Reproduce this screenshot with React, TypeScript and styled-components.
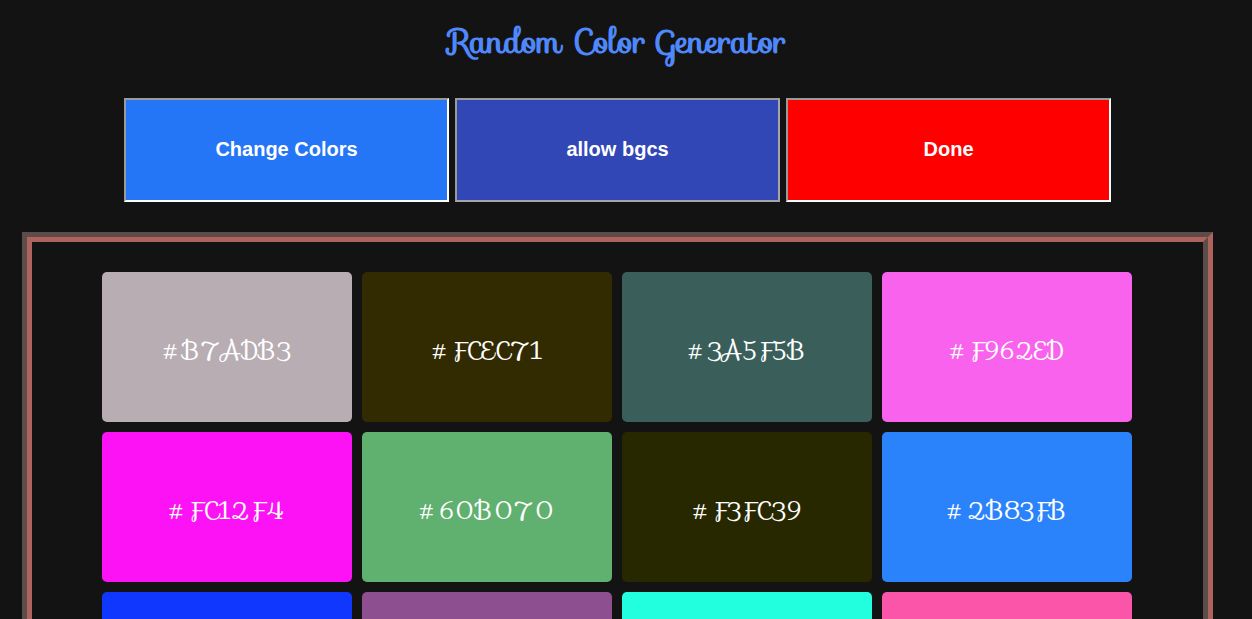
import React from "react";
import styled, { createGlobalStyle } from "styled-components";

const GlobalStyle = createGlobalStyle`
  *, *::before, *::after { box-sizing: border-box; }
  body {
    margin: 0;
    background: #131313;
    color: #ffffff;
    font-family: "Liberation Sans", Arial, sans-serif;
  }
`;

const Page = styled.main`
  padding: 18px 39px 40px 22px;
`;

const Title = styled.h1`
  margin: 0;
  color: #4f88fb;
  font-family: "Sofia", cursive;
  font-size: 32px;
  font-weight: 700;
  line-height: 48px;
  text-align: center;
`;

const Toolbar = styled.div`
  display: flex;
  gap: 6px;
  margin: 32px 102px 30px;
`;

const ActionButton = styled.button<{ $fill: string; $edge: string }>`
  flex: 1;
  height: 104px;
  padding: 0 0 2px;
  border: 2px solid;
  border-color: #9a9a9a ${(p) => p.$edge} ${(p) => p.$edge} #9a9a9a;
  background: ${(p) => p.$fill};
  color: #ffffff;
  font-family: inherit;
  font-size: 20px;
  font-weight: 700;
  cursor: pointer;
`;

const Frame = styled.section`
  border: 5px solid;
  border-color: #5c4d4a #ae635c #ae635c #5c4d4a;
`;

const Swatches = styled.div`
  display: flex;
  flex-wrap: wrap;
  justify-content: center;
  gap: 10px;
  padding: 30px 61px 30px 60px;
  border: 5px solid;
  border-color: #ae635c #5c4d4a #5c4d4a #ae635c;
`;

const Swatch = styled.div<{ $color: string }>`
  display: flex;
  align-items: center;
  justify-content: center;
  width: 250px;
  height: 150px;
  padding-top: 8px;
  border-radius: 5px;
  background: ${(p) => p.$color};
  font-family: "Sofia", cursive;
  font-size: 24px;
`;

const actions = [
  { label: "Change Colors", fill: "#2476f6", edge: "#ffffff" },
  { label: "allow bgcs", fill: "#3147b6", edge: "#a5a5a5" },
  { label: "Done", fill: "#ff0000", edge: "#ffffff" },
];

const swatches = [
  { color: "#b7adb3", label: "#B7ADB3" },
  { color: "#322a00", label: "#FCEC71" },
  { color: "#3a5f5b", label: "#3A5F5B" },
  { color: "#f962ed", label: "#F962ED" },
  { color: "#fc12f4", label: "#FC12F4" },
  { color: "#60b070", label: "#60B070" },
  { color: "#282800", label: "#F3FC39" },
  { color: "#2b83fb", label: "#2B83FB" },
  { color: "#1037fe" },
  { color: "#8d4f90" },
  { color: "#22ffde" },
  { color: "#fb55aa" },
];

export default function App() {
  return (
    <Page>
      <GlobalStyle />
      <Title>Random Color Generator</Title>
      <Toolbar>
        {actions.map((a) => (
          <ActionButton key={a.label} type="button" $fill={a.fill} $edge={a.edge}>
            {a.label}
          </ActionButton>
        ))}
      </Toolbar>
      <Frame>
        <Swatches>
          {swatches.map((s) => (
            <Swatch key={s.color} $color={s.color}>
              {s.label}
            </Swatch>
          ))}
        </Swatches>
      </Frame>
    </Page>
  );
}
